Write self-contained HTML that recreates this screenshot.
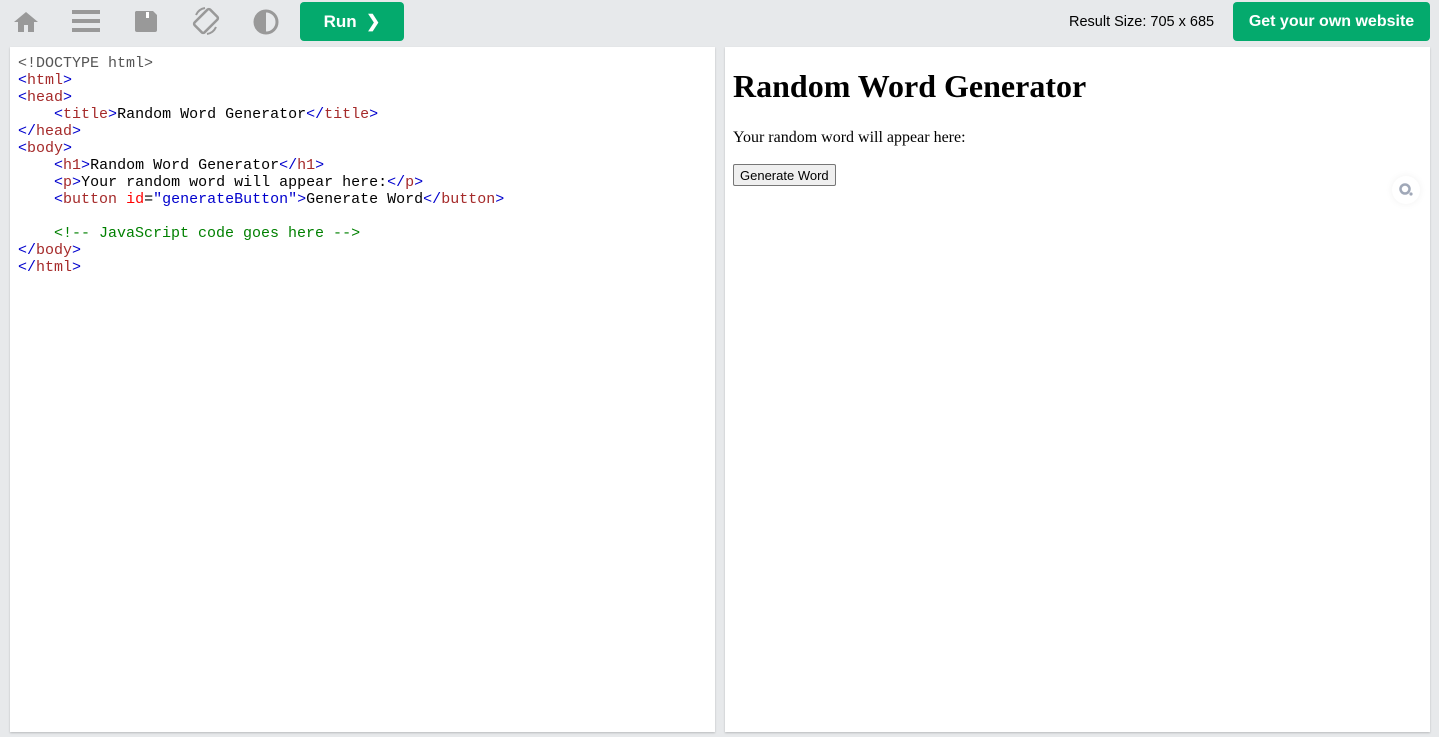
<!DOCTYPE html>
<html><head><style>
body{margin:0;width:1439px;height:737px;background:#e7e9eb;position:relative;overflow:hidden;font-family:"Liberation Sans",sans-serif}
.ic{position:absolute;top:8px}
.run{position:absolute;left:300px;top:2px;width:104px;height:39px;background:#04aa6d;border-radius:4px;color:#fff;font-weight:bold;font-size:17px;line-height:39px;text-align:center}
.rs{position:absolute;left:1069px;top:14px;font-size:14.5px;color:#000}
.gy{position:absolute;left:1233px;top:2px;width:197px;height:39px;background:#04aa6d;border-radius:4px;color:#fff;font-weight:bold;font-size:16px;line-height:39px;text-align:center}
.pl{position:absolute;top:47px;height:685px;width:705px;background:#fff;box-shadow:0 1px 2px rgba(0,0,0,.2)}
pre{margin:0;position:absolute;left:8px;top:8px;font-family:"Liberation Mono",monospace;font-size:15px;line-height:17px;color:#000}
.t{color:#a52a2a}.b{color:#0000cd}.a{color:red}.c{color:#008000}.d{color:#555}
.r{font-family:"Liberation Serif",serif;position:absolute;left:8px;top:0}
h1{font-size:32px;margin:21px 0 24px}
p{font-size:16px;margin:16px 0 17px}
button{font-family:"Liberation Sans",sans-serif;font-size:13px;padding:1px 6px;border:1px solid #767676;border-radius:2px;background:#efefef;height:22px}
</style></head><body>
<svg class="ic" style="left:12px" width="28" height="28" viewBox="0 0 28 28"><path d="M14 4L2 14h4v10h6v-7h4v7h6V14h4z" fill="#999"/></svg>
<svg class="ic" style="left:71px" width="30" height="28" viewBox="0 0 30 28"><rect x="1" y="2" width="28" height="4" fill="#999"/><rect x="1" y="11" width="28" height="4" fill="#999"/><rect x="1" y="20" width="28" height="4" fill="#999"/></svg>
<svg class="ic" style="left:134px" width="24" height="26" viewBox="0 0 24 26"><path d="M2 3h17l4 4v15a2 2 0 0 1-2 2H3a2 2 0 0 1-2-2V4z" fill="#999"/><rect x="12" y="4" width="3" height="6" fill="#fff"/></svg>
<svg class="ic" style="left:191px;top:5px" width="30" height="32" viewBox="0 0 30 32"><rect x="8" y="5" width="14" height="22" rx="2" transform="rotate(45 15 16)" fill="none" stroke="#999" stroke-width="2.5"/><path d="M5 10A12 12 0 0 1 14 3M25 22A12 12 0 0 1 16 29" fill="none" stroke="#999" stroke-width="2"/></svg>
<svg class="ic" style="left:253px;top:9px" width="26" height="26" viewBox="0 0 26 26"><circle cx="13" cy="13" r="11" fill="none" stroke="#999" stroke-width="3"/><path d="M13 2a11 11 0 0 0 0 22z" fill="#999"/></svg>
<div class="run">Run &nbsp;❯</div>
<div class="rs">Result Size: 705 x 685</div>
<div class="gy">Get your own website</div>
<div class="pl" style="left:10px"><pre><span class="d">&lt;!DOCTYPE html&gt;</span>
<span class="b">&lt;</span><span class="t">html</span><span class="b">&gt;</span>
<span class="b">&lt;</span><span class="t">head</span><span class="b">&gt;</span>
    <span class="b">&lt;</span><span class="t">title</span><span class="b">&gt;</span>Random Word Generator<span class="b">&lt;/</span><span class="t">title</span><span class="b">&gt;</span>
<span class="b">&lt;/</span><span class="t">head</span><span class="b">&gt;</span>
<span class="b">&lt;</span><span class="t">body</span><span class="b">&gt;</span>
    <span class="b">&lt;</span><span class="t">h1</span><span class="b">&gt;</span>Random Word Generator<span class="b">&lt;/</span><span class="t">h1</span><span class="b">&gt;</span>
    <span class="b">&lt;</span><span class="t">p</span><span class="b">&gt;</span>Your random word will appear here:<span class="b">&lt;/</span><span class="t">p</span><span class="b">&gt;</span>
    <span class="b">&lt;</span><span class="t">button</span> <span class="a">id</span>=<span class="b">"generateButton"</span><span class="b">&gt;</span>Generate Word<span class="b">&lt;/</span><span class="t">button</span><span class="b">&gt;</span>

    <span class="c">&lt;!-- JavaScript code goes here --&gt;</span>
<span class="b">&lt;/</span><span class="t">body</span><span class="b">&gt;</span>
<span class="b">&lt;/</span><span class="t">html</span><span class="b">&gt;</span></pre></div>
<div class="pl" style="left:725px"><div class="r"><h1>Random Word Generator</h1><p>Your random word will appear here:</p><button>Generate Word</button></div>
<div style="position:absolute;left:667px;top:129px;width:28px;height:28px;background:#fff;border-radius:14px;box-shadow:0 0 8px rgba(0,0,0,.06)"><svg width="28" height="28"><circle cx="13" cy="13" r="4.5" fill="none" stroke="#a0a8b8" stroke-width="2.5"/><circle cx="19" cy="18" r="1.6" fill="#a0a8b8"/></svg></div>
</div>
</body></html>
